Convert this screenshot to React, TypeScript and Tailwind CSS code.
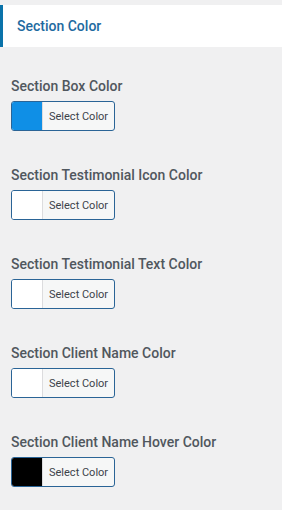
const fields = [
  { label: 'Section Box Color', color: '#0f8fe6' },
  { label: 'Section Testimonial Icon Color', color: '#ffffff' },
  { label: 'Section Testimonial Text Color', color: '#ffffff' },
  { label: 'Section Client Name Color', color: '#ffffff' },
  { label: 'Section Client Name Hover Color', color: '#000000' },
]

function ColorButton({ color }: { color: string }) {
  return (
    <button className="flex h-[30px] w-[104px] overflow-hidden rounded-[3px] border border-[#2a6496] bg-[#f6f7f7] p-0">
      <span className="h-full w-[31px] border-r border-[#dcdcde]" style={{ background: color }} />
      <span className="flex-1 self-center text-left pl-[6px] text-[11px] leading-none text-[#3c434a]">Select Color</span>
    </button>
  )
}

export default function App() {
  return (
    <div className="min-h-[510px] w-[282px] bg-[#f0f0f1] pt-[5px] font-['Roboto',sans-serif]">
      <div className="flex h-[42px] items-center border-l-[3px] border-[#0a73aa] bg-white pl-[14px]">
        <span className="text-[14px] font-medium text-[#1e6aa0]">Section Color</span>
      </div>
      <div className="flex flex-col gap-[35px] px-[11px] pt-[30px]">
        {fields.map((f) => (
          <div key={f.label} className="flex flex-col gap-[5px]">
            <label className="text-[14px] font-medium leading-[19px] text-[#50575e]">{f.label}</label>
            <ColorButton color={f.color} />
          </div>
        ))}
      </div>
    </div>
  )
}
